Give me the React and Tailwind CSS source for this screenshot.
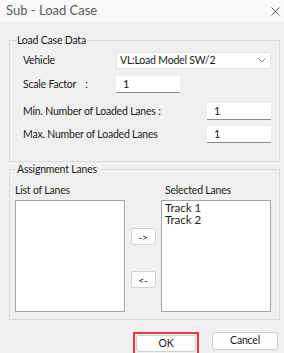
import { useState } from "react";

const font = { fontFamily: 'Lato, "Noto Sans", sans-serif' };

// small white text box used across the dialog
const Field = ({ value, className = "" }) => (
  <div
    className={`flex h-[17px] items-center border-b border-[#8a8a8a] bg-white pl-[7px] text-[11px] text-[#111] ${className}`}
  >
    {value}
  </div>
);

const SmallButton = ({ label }) => (
  <button className="flex h-[17px] w-[25px] items-center justify-center rounded-[3px] border border-[#d5d5d5] bg-[#fdfdfd] text-[10px] leading-none text-[#222]">
    {label}
  </button>
);

export default function App() {
  const [lanes] = useState(["Track 1", "Track 2"]);

  return (
    <div
      className="flex h-[353px] w-[284px] flex-col overflow-hidden bg-[#f0f0f0] text-[10.5px] tracking-[-0.2px] text-[#1a1a1a]"
      style={font}
    >
      {/* title bar */}
      <div className="flex h-[22px] shrink-0 items-center justify-between bg-[#f9f9f9] pl-[6px] pr-[4px]">
        <span className="text-[13px] tracking-normal text-[#5a5a5a]">Sub - Load Case</span>
        <svg width="9" height="9" viewBox="0 0 9 9">
          <path d="M0.5 0.5 L8.5 8.5 M8.5 0.5 L0.5 8.5" stroke="#555" strokeWidth="0.9" />
        </svg>
      </div>

      {/* load case data */}
      <fieldset className="ml-[9px] mr-[4px] mt-[11px] border border-[#dcdcdc] px-0 pb-[18px]">
        <legend className="ml-[6px] px-[1px] leading-[14px]">Load Case Data</legend>
        <div className="pl-[13px] pr-[8px]">
          <div className="mt-[5px] flex items-center">
            <span className="w-[93px]">Vehicle</span>
            <div className="flex h-[17px] flex-1 items-center justify-between border border-[#e2e2e2] bg-white pl-[3px] pr-[4px]">
              <span>VL:Load Model SW/2</span>
              <svg width="8" height="5" viewBox="0 0 8 5">
                <path d="M0.5 0.5 L4 4 L7.5 0.5" fill="none" stroke="#777" strokeWidth="0.9" />
              </svg>
            </div>
          </div>
          <div className="mt-[7px] flex items-center">
            <span className="w-[93px]">
              Scale Factor<span className="ml-[9px]">:</span>
            </span>
            <Field value="1" className="w-[64px]" />
          </div>
          <div className="mt-[10px] flex items-center justify-between">
            <span>Min. Number of Loaded Lanes :</span>
            <Field value="1" className="w-[64px]" />
          </div>
          <div className="mt-[6px] flex items-center justify-between">
            <span>Max. Number of Loaded Lanes</span>
            <Field value="1" className="w-[64px]" />
          </div>
        </div>
      </fieldset>

      {/* assignment lanes */}
      <fieldset className="ml-[9px] mr-[4px] mt-0 border border-[#dcdcdc] px-0 pb-[7px]">
        <legend className="ml-[6px] px-[1px] leading-[14px]">Assignment Lanes</legend>
        <div className="mt-[7px] flex pl-[5px] pr-[8px]">
          <div className="flex w-[110px] flex-col">
            <span className="leading-[14px]">List of Lanes</span>
            <div className="mt-[3px] h-[112px] border border-[#a3a3a3] bg-white" />
          </div>
          <div className="flex flex-1 flex-col items-center gap-[26px] pt-[45px]">
            <SmallButton label="->" />
            <SmallButton label="<-" />
          </div>
          <div className="flex w-[110px] flex-col">
            <span className="pl-[4px] leading-[14px]">Selected Lanes</span>
            <div className="mt-[3px] flex h-[112px] flex-col border border-[#a3a3a3] bg-white pl-[3px] pt-[1px] text-[11.5px] leading-[12px] tracking-normal">
              {lanes.map((l) => (
                <span key={l}>{l}</span>
              ))}
            </div>
          </div>
        </div>
      </fieldset>

      {/* dialog buttons */}
      <div className="mt-[12px] flex justify-end gap-[13px] pr-[6px]">
        <div className="border-2 border-[#e5393b] p-[1px]">
          <button className="flex h-[17px] w-[60px] items-center justify-center rounded-[3px] border border-[#cfcfcf] bg-[#fdfdfd]">
            OK
          </button>
        </div>
        <button className="flex h-[18px] w-[66px] items-center justify-center rounded-[3px] border border-[#cfcfcf] bg-[#fdfdfd]">
          Cancel
        </button>
      </div>
    </div>
  );
}
